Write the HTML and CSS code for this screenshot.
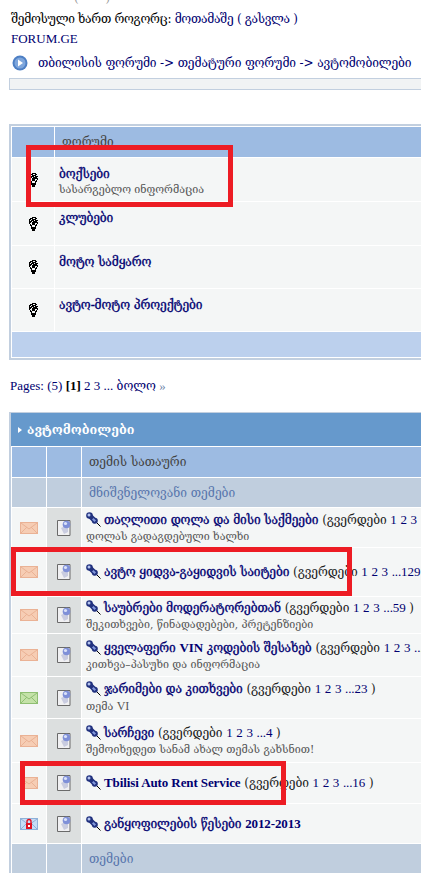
FILE: index.html
```html
<!DOCTYPE html>
<html>
<head>
    <title>FORUM.GE</title>
    <link rel="stylesheet" href="styles.css">
</head>
<body>
    <svg class="defs" width="0" height="0">
        <symbol id="bulb" viewBox="0 0 9 14" shape-rendering="crispEdges">
            <path d="M3 0h4v1H3zM1 1h3v1H1zM6 1h2v1H6zM0 2h2v1H0zM3 2h4v1H3zM0 3h1v1H0zM2 3h3v1H2zM6 3h3v1H6zM0 4h3v1H0zM4 4h4v1H4zM0 5h2v1H0zM3 5h6v1H3zM0 6h1v1H0zM3 6h3v1H3zM8 6h1v1H8zM1 7h1v1H1zM3 7h3v1H3zM7 7h1v1H7zM1 8h2v1H1zM6 8h2v1H6zM2 9h1v1H2zM6 9h1v1H6zM2 10h5v1H2zM2 11h5v1H2zM3 12h3v1H3zM3 13h3v1H3z" fill="#000"/>
        </symbol>
        <symbol id="mail" viewBox="0 0 18 12">
            <rect x=".5" y=".5" width="17" height="11" fill="#f6cdb4" stroke="#eab295"/>
            <path d="M1 1l8 6 8-6M1 11l6-6M17 11l-6-6" fill="none" stroke="#eab295"/>
        </symbol>
        <symbol id="mailnew" viewBox="0 0 18 12">
            <rect x=".5" y=".5" width="17" height="11" fill="#c4e2a8" stroke="#8fbf72"/>
            <path d="M1 1l8 6 8-6M1 11l6-6M17 11l-6-6" fill="none" stroke="#8fbf72"/>
        </symbol>
        <symbol id="maillock" viewBox="0 0 18 12">
            <rect x=".5" y=".5" width="17" height="11" fill="#c5dcf5" stroke="#8fb0d8"/>
            <path d="M1 1l8 6 8-6M1 11l6-6M17 11l-6-6" fill="none" stroke="#8fb0d8"/>
            <path d="M6 5h6v6H6z" fill="#e01020"/>
            <path d="M7 5V3.500a2 2 0 0 1 4 0V5" fill="none" stroke="#e01020" stroke-width="1.400"/>
            <path d="M8 7h2v2H8z" fill="#fff"/>
        </symbol>
        <symbol id="doc" viewBox="0 0 14 16">
            <path d="M.5.500h12.500v15H.5z" fill="#f0f0f2" stroke="#6a6a6a"/>
            <path d="M4 8l4-2 3 1v5l-4 2z" fill="#c9cce0"/>
            <circle cx="9.500" cy="4.500" r="3.800" fill="#7f90d8"/>
            <circle cx="8.500" cy="3.500" r="1.600" fill="#dbe2f8"/>
        </symbol>
        <symbol id="pin" viewBox="0 0 15 15">
            <path d="M9.500 9.500l5 5" stroke="#000" stroke-width="1"/>
            <circle cx="3.500" cy="3.500" r="3.300" fill="#22327f"/>
            <path d="M2.500 6l3.500-3.500 5.500 5.500-3.500 3.500z" fill="#22327f"/>
            <circle cx="8.800" cy="8.800" r="3" fill="#22327f"/>
            <circle cx="3" cy="3" r="1.500" fill="#b4c4f0"/>
            <path d="M6 7.500l1.500-1.500 2.500 2.500-1.500 1.500z" fill="#8298dc"/>
        </symbol>
    </svg>

    <div class="stub">(&nbsp;&nbsp;&nbsp;&nbsp;&nbsp;&nbsp;&nbsp;)</div>
    <div class="userline">შემოსული ხართ როგორც: <a>მოთამაშე</a> <a>( გასვლა )</a></div>
    <div class="sitename"><a>FORUM.GE</a></div>
    <div class="navstrip">
        <svg class="navicon" width="16" height="16" viewBox="0 0 16 16">
            <circle cx="8" cy="8" r="7.500" fill="#4d7fc4"/>
            <circle cx="8" cy="8" r="5.500" fill="#7ea6dc"/>
            <path d="M6 4.500l5 3.500-5 3.500z" fill="#fff"/>
        </svg>
        <a>თბილისის ფორუმი -&gt; თემატური ფორუმი -&gt; ავტომობილები</a>
    </div>
    <div class="emptybar"></div>

    <div class="box subforums">
        <table>
            <tr class="head">
                <td class="c-icon"></td>
                <td>ფორუმი</td>
            </tr>
            <tr class="forum tall">
                <td class="c-icon"><svg width="9" height="14"><use href="#bulb"/></svg></td>
                <td><a class="title">ბოქსები</a><div class="desc">სასარგებლო ინფორმაცია</div></td>
            </tr>
            <tr class="forum tall">
                <td class="c-icon"><svg width="9" height="14"><use href="#bulb"/></svg></td>
                <td><a class="title">კლუბები</a></td>
            </tr>
            <tr class="forum">
                <td class="c-icon"><svg width="9" height="14"><use href="#bulb"/></svg></td>
                <td><a class="title">მოტო სამყარო</a></td>
            </tr>
            <tr class="forum">
                <td class="c-icon"><svg width="9" height="14"><use href="#bulb"/></svg></td>
                <td><a class="title">ავტო-მოტო პროექტები</a></td>
            </tr>
            <tr class="foot"><td colspan="2"></td></tr>
        </table>
    </div>

    <div class="pages"><a>Pages:</a> <a>(5)</a> <b>[1]</b> <a>2</a> <a>3</a> <a>...</a> <a class="ka">ბოლო</a> <a class="raquo">»</a></div>

    <div class="box topics">
        <div class="maintitle"><span class="arrow"></span>ავტომობილები</div>
        <table>
            <tr class="head">
                <td class="c-mail"></td>
                <td class="c-doc"></td>
                <td>თემის სათაური</td>
            </tr>
            <tr class="section">
                <td></td><td></td>
                <td>მნიშვნელოვანი თემები</td>
            </tr>
            <tr class="topic h40">
                <td class="c-mail"><svg width="18" height="12"><use href="#mail"/></svg></td>
                <td class="c-doc"><svg width="14" height="16"><use href="#doc"/></svg></td>
                <td><svg class="pin" width="15" height="15"><use href="#pin"/></svg><a class="title">თაღლითი დოლა და მისი საქმეები</a> <span class="pg">(გვერდები <a>1</a> <a>2</a> <a>3</a> <a>...</a><a>1</a>)</span><div class="desc">დოლას გადაგდებული ხალხი</div></td>
            </tr>
            <tr class="topic h49">
                <td class="c-mail"><svg width="18" height="12"><use href="#mail"/></svg></td>
                <td class="c-doc"><svg width="14" height="16"><use href="#doc"/></svg></td>
                <td><svg class="pin" width="15" height="15"><use href="#pin"/></svg><a class="title">ავტო ყიდვა-გაყიდვის საიტები</a> <span class="pg">(გვერდები <a>1</a> <a>2</a> <a>3</a> <a>...129</a> )</span></td>
            </tr>
            <tr class="topic h37">
                <td class="c-mail"><svg width="18" height="12"><use href="#mail"/></svg></td>
                <td class="c-doc"><svg width="14" height="16"><use href="#doc"/></svg></td>
                <td><svg class="pin" width="15" height="15"><use href="#pin"/></svg><a class="title">საუბრები მოდერატორებთან</a> <span class="pg">(გვერდები <a>1</a> <a>2</a> <a>3</a> <a>...59</a> )</span><div class="desc">შეკითხვები, წინადადებები, პრეტენზიები</div></td>
            </tr>
            <tr class="topic h43">
                <td class="c-mail"><svg width="18" height="12"><use href="#mail"/></svg></td>
                <td class="c-doc"><svg width="14" height="16"><use href="#doc"/></svg></td>
                <td><svg class="pin" width="15" height="15"><use href="#pin"/></svg><a class="title">ყველაფერი <b>VIN</b> კოდების შესახებ</a> <span class="pg">(გვერდები <a>1</a> <a>2</a> <a>3</a> <a>...</a><a>1</a>)</span><div class="desc">კითხვა–პასუხი და ინფორმაცია</div></td>
            </tr>
            <tr class="topic h42">
                <td class="c-mail"><svg width="18" height="12"><use href="#mailnew"/></svg></td>
                <td class="c-doc"><svg width="14" height="16"><use href="#doc"/></svg></td>
                <td><svg class="pin" width="15" height="15"><use href="#pin"/></svg><a class="title">ჯარიმები და კითხვები</a> <span class="pg">(გვერდები <a>1</a> <a>2</a> <a>3</a> <a>...23</a> )</span><div class="desc">თემა <span class="latin">VI</span></div></td>
            </tr>
            <tr class="topic h44">
                <td class="c-mail"><svg width="18" height="12"><use href="#mail"/></svg></td>
                <td class="c-doc"><svg width="14" height="16"><use href="#doc"/></svg></td>
                <td><svg class="pin" width="15" height="15"><use href="#pin"/></svg><a class="title">სარჩევი</a> <span class="pg">(გვერდები <a>1</a> <a>2</a> <a>3</a> <a>...4</a> )</span><div class="desc">შემოიხედეთ სანამ ახალ თემას გახსნით!</div></td>
            </tr>
            <tr class="topic h41">
                <td class="c-mail"><svg width="18" height="12"><use href="#mail"/></svg></td>
                <td class="c-doc"><svg width="14" height="16"><use href="#doc"/></svg></td>
                <td><svg class="pin" width="15" height="15"><use href="#pin"/></svg><a class="title"><b>Tbilisi Auto Rent Service</b></a> <span class="pg">(გვერდები <a>1</a> <a>2</a> <a>3</a> <a>...16</a> )</span></td>
            </tr>
            <tr class="topic h40">
                <td class="c-mail"><svg width="18" height="12"><use href="#maillock"/></svg></td>
                <td class="c-doc"><svg width="14" height="16"><use href="#doc"/></svg></td>
                <td><svg class="pin" width="15" height="15"><use href="#pin"/></svg><a class="title">განყოფილების წესები <b>2012-2013</b></a></td>
            </tr>
            <tr class="section">
                <td></td><td></td>
                <td>თემები</td>
            </tr>
        </table>
    </div>

    <!-- annotation boxes drawn over the screenshot -->
    <div class="mark mark1"></div>
    <div class="mark mark2"></div>
    <div class="mark mark3"></div>
</body>
</html>
```

FILE: styles.css
```css
html, body {
    height: 873px;
    overflow: hidden;
}
body {
    margin: 0;
    position: relative;
    background-color: #fff;
    color: #000;
    font-family: "DejaVu Serif", "Liberation Serif", serif;
    font-size: 12px;
}
a {
    color: #000070;
}
.defs {
    position: absolute;
}
.stub {
    height: 9px;
    margin-top: -9px;
    padding-left: 74px;
    color: #999;
}
.userline {
    height: 20px;
    padding: 9px 0 0 11px;
    line-height: 20px;
    letter-spacing: -.3px;
}
.sitename {
    height: 20px;
    padding-left: 11px;
    line-height: 20px;
    font-family: "Liberation Serif", serif;
    font-size: 13px;
}
.navstrip {
    display: flex;
    align-items: center;
    gap: 10px;
    height: 22px;
    padding: 3px 0 0 12px;
    letter-spacing: -.12px;
    white-space: nowrap;
}
.emptybar {
    height: 10px;
    margin: 4px -10px 0 9px;
    background-color: #f1f3f4;
    border: 1px solid #c2cfdf;
}
.box {
    width: 640px;
    margin-left: 9px;
    border: 2px solid #c2cfdf;
    border-right: 0;
}
.box table {
    width: 100%;
    border-collapse: collapse;
    table-layout: fixed;
}
.box td {
    box-sizing: border-box;
    padding: 0;
    border: 1px solid #fff;
    vertical-align: top;
}
.subforums {
    margin-top: 34px;
}
.c-icon {
    width: 43px;
    text-align: center;
}
.head td {
    height: 31px;
    background-color: #9dbbe2;
    color: #444;
    padding-left: 7px;
    vertical-align: middle;
}
.head .c-icon, .head .c-mail, .head .c-doc {
    padding: 0;
}
.forum td {
    height: 43px;
    background-color: #f4f6f6;
}
.forum.tall td {
    height: 44px;
}
.forum td + td {
    padding: 9px 0 0 4px;
}
.forum .c-icon {
    vertical-align: middle;
}
.forum svg {
    display: block;
    margin: 0 auto;
}
.title {
    letter-spacing: -.1px;
    white-space: nowrap;
    -webkit-text-stroke: .3px #000070;
}
.title b {
    font-family: "Liberation Serif", serif;
    font-size: 13px;
    -webkit-text-stroke: 0;
}
.desc {
    margin-top: 2px;
    color: #555;
    font-size: 10.7px;
    white-space: nowrap;
}
.latin {
    font-family: "Liberation Serif", serif;
    font-size: 12px;
}
.foot td {
    height: 26px;
    background-color: #bcd0ed;
}
.pages {
    height: 20px;
    margin-top: 16px;
    padding-left: 10px;
    line-height: 20px;
    font-family: "Liberation Serif", serif;
    font-size: 13px;
    white-space: nowrap;
}
.pages .ka {
    font-family: "DejaVu Serif", serif;
    font-size: 12px;
}
.raquo {
    color: #6c7fa8;
}
.topics {
    margin-top: 16px;
    border-top-width: 1px;
}
.maintitle {
    display: flex;
    align-items: center;
    height: 33px;
    background-color: #6699cc;
    color: #fff;
    font-size: 12.500px;
    font-weight: bold;
}
.arrow {
    width: 0;
    height: 0;
    margin: 0 5px 0 7px;
    border-left: 4px solid #fff;
    border-top: 3px solid transparent;
    border-bottom: 3px solid transparent;
}
.c-mail, .c-doc {
    width: 35px;
    text-align: center;
}
.section td {
    height: 30px;
    padding-left: 7px;
    background-color: #c0cede;
    color: #5876ad;
    vertical-align: middle;
}
.topic td {
    background-color: #f4f6f6;
    vertical-align: middle;
    white-space: nowrap;
}
.h37 td { height: 37px; }
.h40 td { height: 40px; }
.h41 td { height: 41px; }
.h42 td { height: 42px; }
.h43 td { height: 43px; }
.h44 td { height: 44px; }
.h49 td { height: 49px; }
.topic td.c-doc {
    background-color: #dcdfdf;
}
.topic td + td + td {
    padding-left: 4px;
}
.topic svg {
    display: block;
    margin: 0 auto;
}
.topic svg.pin {
    display: inline-block;
    margin: 0 3px 0 0;
    vertical-align: -3px;
}
.pg {
    color: #222;
    letter-spacing: -.1px;
}
.pg a {
    font-family: "Liberation Serif", serif;
    font-size: 13px;
}
.mark {
    position: absolute;
    border: 5px solid #ed1c24;
    box-sizing: border-box;
}
.mark1 {
    left: 26px;
    top: 145px;
    width: 207px;
    height: 62px;
}
.mark2 {
    left: 11px;
    top: 547px;
    width: 341px;
    height: 49px;
}
.mark3 {
    left: 20px;
    top: 761px;
    width: 266px;
    height: 44px;
}
```
